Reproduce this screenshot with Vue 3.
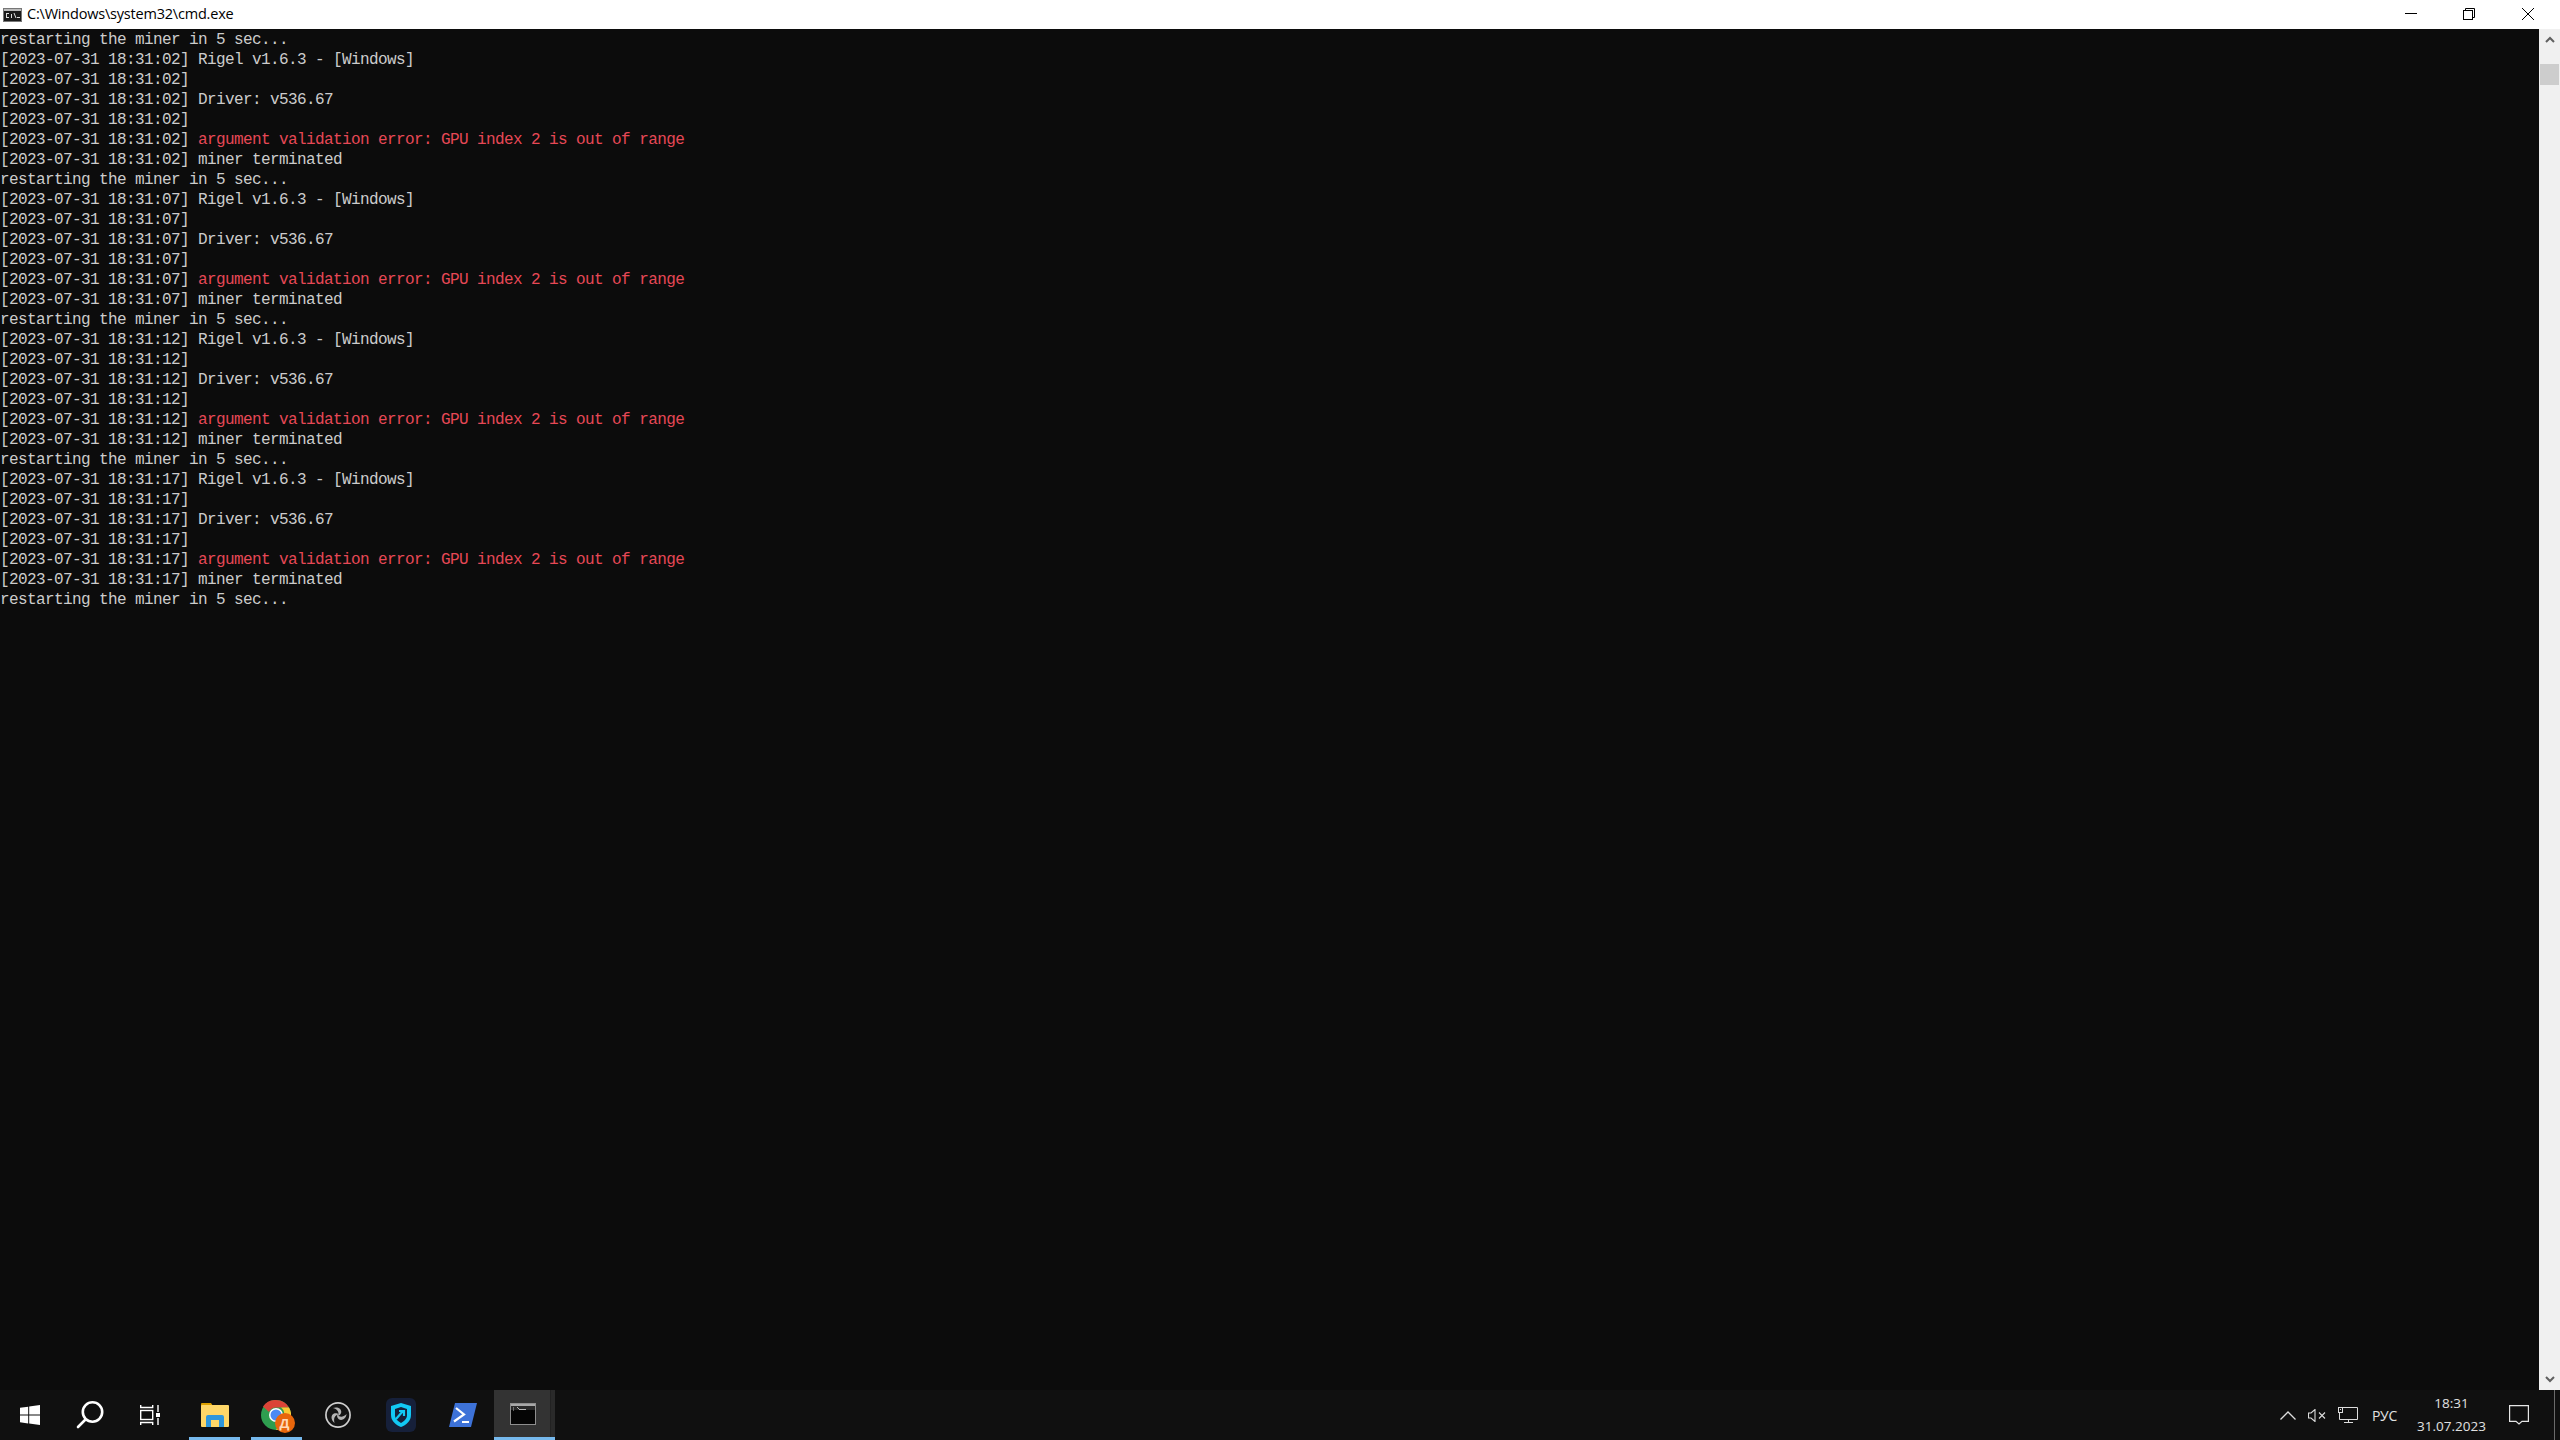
<script setup>
const times = ['02', '07', '12', '17']
const restart = 'restarting the miner in 5 sec...'
const lines = [{ prefix: '', text: restart, err: false }]
for (const s of times) {
  const p = `[2023-07-31 18:31:${s}]`
  lines.push(
    { prefix: p, text: ' Rigel v1.6.3 - [Windows]', err: false },
    { prefix: p, text: '', err: false },
    { prefix: p, text: ' Driver: v536.67', err: false },
    { prefix: p, text: '', err: false },
    { prefix: p, text: ' argument validation error: GPU index 2 is out of range', err: true },
    { prefix: p, text: ' miner terminated', err: false },
    { prefix: '', text: restart, err: false }
  )
}
const blade = 'M14 15C15.500 11.500 14 8 8.500 6.500 13 4.500 18 7 17.500 11 17 13.500 15.500 14.500 14 15z'
</script>

<template>
  <div class="window">
    <header class="titlebar">
      <svg class="cmd-mini" width="19" height="14" viewBox="0 0 19 14">
        <rect x="0.5" y="0.5" width="18" height="13" fill="#1a1a1a" stroke="#777" />
        <rect x="1" y="1" width="17" height="2" fill="#bbb" />
        <rect x="3" y="5" width="3" height="5" fill="#ddd" />
        <rect x="4" y="6" width="2" height="3" fill="#1a1a1a" />
        <rect x="8" y="6" width="1" height="4" fill="#ddd" />
        <path d="M11 5l2 5" stroke="#ddd" fill="none" />
        <rect x="14" y="9" width="3" height="1" fill="#ddd" />
      </svg>
      <span class="title">C:\Windows\system32\cmd.exe</span>
      <div class="controls">
        <div class="ctl">
          <svg width="12" height="12" viewBox="0 0 12 12"><rect x="0" y="5" width="12" height="1" fill="#000" /></svg>
        </div>
        <div class="ctl">
          <svg width="12" height="12" viewBox="0 0 12 12" fill="none" stroke="#000">
            <rect x="0.5" y="2.5" width="9" height="9" />
            <path d="M2.5 2.5V.5h9v9H9.5" />
          </svg>
        </div>
        <div class="ctl">
          <svg width="12" height="12" viewBox="0 0 12 12" stroke="#000" stroke-width="1"><path d="M0 0l12 12M12 0L0 12" /></svg>
        </div>
      </div>
    </header>

    <main class="body">
      <div class="console">
        <div v-for="(l, i) in lines" :key="i" class="line">{{ l.prefix }}<span :class="{ err: l.err }">{{ l.text }}</span></div>
      </div>
      <aside class="scrollbar">
        <svg class="arrow up" width="10" height="7" viewBox="0 0 10 7"><path d="M1 6l4-4 4 4" fill="none" stroke="#606060" stroke-width="2" /></svg>
        <div class="thumb"></div>
        <svg class="arrow down" width="10" height="7" viewBox="0 0 10 7"><path d="M1 1l4 4 4-4" fill="none" stroke="#606060" stroke-width="2" /></svg>
      </aside>
    </main>

    <footer class="taskbar">
      <div class="left">
        <div class="sys">
          <svg width="20" height="20" viewBox="0 0 20 20" fill="#fff">
            <path d="M0 2.8l8.2-1.1v7.9H0zM9.2 1.500L20 0v9.600H9.200zM0 10.500h8.200v7.900L0 17.200zM9.200 10.500H20V20L9.200 18.500z" />
          </svg>
        </div>
        <div class="sys">
          <svg width="28" height="28" viewBox="0 0 28 28" fill="none" stroke="#fff" stroke-width="2.6">
            <circle cx="16.5" cy="11" r="9.7" />
            <path d="M9.5 18.5L2 26" stroke-linecap="round" />
          </svg>
        </div>
        <div class="sys">
          <svg width="20" height="20" viewBox="0 0 20 20" fill="none" stroke="#fff" stroke-width="1.4">
            <path d="M.7 0v2.500h12V0M.7 20v-2.500h12V20" />
            <rect x="0.7" y="5.5" width="12" height="9" />
            <path d="M18 0v7M18 13v7" />
            <rect x="16" y="8" width="4" height="4" fill="#fff" stroke="none" />
          </svg>
        </div>
        <div class="apps">
          <div class="app on">
            <svg width="28" height="26" viewBox="0 0 28 26">
              <path d="M0 2a1 1 0 011-1h9l2 3h-12z" fill="#dca000" />
              <rect x="0" y="3" width="28" height="22" rx="1" fill="#ffd768" />
              <path d="M5 25V15a2 2 0 012-2h14a2 2 0 012 2v10h-5v-7h-8v7z" fill="#2f96dc" />
            </svg>
          </div>
          <div class="app on">
            <div class="chrome">
              <svg width="30" height="30" viewBox="0 0 30 30">
                <circle cx="15" cy="15" r="15" fill="#2e9e4f" />
                <path d="M15 0a15 15 0 0113 7.500H15a7.500 7.500 0 00-7 4.500L2 6.500A15 15 0 0115 0z" fill="#db4437" />
                <path d="M28 7.500A15 15 0 0115 30l6-11a7.500 7.500 0 00-1-11.500z" fill="#fcc934" />
                <circle cx="15" cy="15" r="7" fill="#fff" />
                <circle cx="15" cy="15" r="5.500" fill="#4a8af4" />
              </svg>
              <span class="badge">Д</span>
            </div>
          </div>
          <div class="app">
            <svg class="obs" width="26" height="26" viewBox="0 0 28 28">
              <circle cx="14" cy="14" r="13" fill="#141414" stroke="#cfcfcf" stroke-width="1.800" />
              <g fill="#b4b4b4">
                <path :d="blade" />
                <path :d="blade" transform="rotate(120 14 14)" />
                <path :d="blade" transform="rotate(240 14 14)" />
              </g>
            </svg>
          </div>
          <div class="app">
            <svg width="30" height="34" viewBox="0 0 30 34">
              <rect width="30" height="34" rx="6" fill="#16203a" />
              <path d="M15 5l10 3v9c0 6-5 10-10 12C10 27 5 23 5 17V8z" fill="#12c8f4" />
              <path d="M15 9l6 2v6c0 4-3 6-6 8-3-2-6-4-6-8v-6z" fill="#16203a" />
              <path d="M10 21l7-8M13 13h5v5" fill="none" stroke="#12c8f4" stroke-width="2.200" />
            </svg>
          </div>
          <div class="app">
            <svg width="28" height="24" viewBox="0 0 28 24">
              <path d="M6 0h22l-6 24H0z" fill="#3d72d8" />
              <path d="M7 5l8 6.500-10 7" fill="none" stroke="#fff" stroke-width="2.200" />
              <path d="M13 19h7" stroke="#fff" stroke-width="2" />
            </svg>
          </div>
          <div class="app active">
            <svg class="term" width="26" height="22" viewBox="0 0 26 22">
              <rect x="0.500" y="0.500" width="25" height="21" fill="#050505" stroke="#8e8e8e" />
              <rect x="1" y="1" width="24" height="2" fill="#a8a8a8" />
              <rect x="1" y="3" width="24" height="4" fill="#2a2a2a" />
              <path d="M3 5h1M3 7h1M7 4.500h1M8 5.500h1M9 6.500h7" stroke="#b8b8b8" stroke-width="1" />
            </svg>
            <span class="divider"></span>
          </div>
        </div>
      </div>

      <div class="tray">
        <svg width="16" height="9" viewBox="0 0 16 9" fill="none" stroke="#ddd" stroke-width="1.300"><path d="M.5 8.500L8 1l7.500 7.500" /></svg>
        <svg width="18" height="13" viewBox="0 0 18 13" fill="none" stroke="#ddd" stroke-width="1.100">
          <path d="M.5 4h2.500l4-3.500v12L3 9H.5z" />
          <path d="M11 3.500l6 6M17 3.500l-6 6" />
        </svg>
        <svg width="20" height="16" viewBox="0 0 20 16" fill="none" stroke="#ddd" stroke-width="1">
          <path d="M3 .5h16.500v12H1.500V6" />
          <rect x="0.500" y="0.500" width="4" height="5" fill="#111" />
          <path d="M2 2.500h1M10.500 12.500v3M6 15.500h9" />
        </svg>
        <span class="lang">РУС</span>
        <div class="clock">
          <span>18:31</span>
          <span>31.07.2023</span>
        </div>
        <svg width="20" height="20" viewBox="0 0 20 20" fill="none" stroke="#e6e6e6" stroke-width="1.200">
          <path d="M.6.600h18.800v15.800h-6.400L10 19l-3-2.600H.6z" />
        </svg>
        <span class="peek"></span>
      </div>
    </footer>
  </div>
</template>

<style>
html, body { margin: 0; background: #0c0c0c; }
</style>

<style scoped>
.window {
  width: 2560px;
  height: 1440px;
  display: flex;
  flex-direction: column;
  overflow: hidden;
  background: #0c0c0c;
}
.titlebar {
  flex: 0 0 29px;
  box-sizing: border-box;
  background: #fff;
  display: flex;
  align-items: center;
  padding: 0 3px 0 3px;
}
.cmd-mini { margin-right: 5px; margin-top: 1px; }
.title {
  font-family: "Open Sans", "Noto Sans", sans-serif;
  font-size: 14.5px;
  letter-spacing: -0.2px;
  color: #000;
  padding-bottom: 2px;
}
.controls { margin-left: auto; display: flex; height: 100%; }
.ctl {
  width: 58.500px;
  display: flex;
  align-items: center;
  justify-content: center;
  box-sizing: border-box;
  padding-bottom: 2px;
}
.body { flex: 1; display: flex; min-height: 0; }
.console {
  flex: 1;
  padding-top: 1px;
  background: #0c0c0c;
  color: #cccccc;
  font-family: "Liberation Mono", monospace;
  font-size: 16px;
  letter-spacing: -0.6px;
  line-height: 20px;
}
.line { height: 20px; white-space: pre; }
.err { color: #e74856; }
.scrollbar {
  flex: 0 0 21px;
  background: #f0f0f0;
  display: flex;
  flex-direction: column;
  align-items: center;
  padding-top: 7px;
}
.thumb { width: 19px; height: 21px; background: #cdcdcd; margin-top: 21px; }
.arrow.down { margin-top: auto; margin-bottom: 7px; }
.taskbar {
  flex: 0 0 50px;
  background: #101010;
  display: flex;
  justify-content: space-between;
  align-items: stretch;
}
.left { display: flex; }
.sys { width: 60px; display: flex; align-items: center; justify-content: center; }
.apps { display: flex; margin-left: 3.5px; }
.app {
  width: 62px;
  display: flex;
  align-items: center;
  justify-content: center;
  position: relative;
}
.app.on::after {
  content: "";
  position: absolute;
  left: 5.500px;
  right: 5.500px;
  bottom: 0;
  height: 3px;
  background: #76b9ed;
}
.app.active {
  width: 61px;
  background: #333333;
  border-bottom: 3px solid #76b9ed;
  box-sizing: border-box;
  padding-top: 0;
}
.obs { margin-left: -2px; }
.term { margin-left: -3px; }
.divider {
  position: absolute;
  right: 0;
  top: 0;
  bottom: 0;
  width: 5px;
  background: #2a2a2a;
  border-left: 1px solid #222;
  box-sizing: border-box;
}
.chrome { position: relative; width: 32px; height: 34px; display: flex; align-items: center; }
.badge {
  position: absolute;
  right: -2px;
  bottom: -1px;
  width: 20px;
  height: 20px;
  border-radius: 50%;
  background: #e8660c;
  color: #ffd9b8;
  font-family: "Open Sans", sans-serif;
  font-size: 13px;
  font-weight: 700;
  line-height: 20px;
  text-align: center;
}
.tray {
  display: flex;
  align-items: center;
  color: #e0e0e0;
  font-family: "Open Sans", "Noto Sans", sans-serif;
}
.tray > svg:nth-child(1) { margin-right: 12px; }
.tray > svg:nth-child(2) { margin-right: 12px; }
.tray > svg:nth-child(3) { margin-right: 14px; }
.lang { font-size: 14px; width: 26px; white-space: nowrap; margin-right: 19px; letter-spacing: -0.3px; }
.clock {
  display: flex;
  flex-direction: column;
  align-items: center;
  width: 69px;
  margin-right: 23px;
  font-size: 13.500px;
  line-height: 23px;
}
.peek {
  width: 1px;
  height: 50px;
  background: #6a6a6a;
  margin: 0 5px 0 25px;
}
</style>
